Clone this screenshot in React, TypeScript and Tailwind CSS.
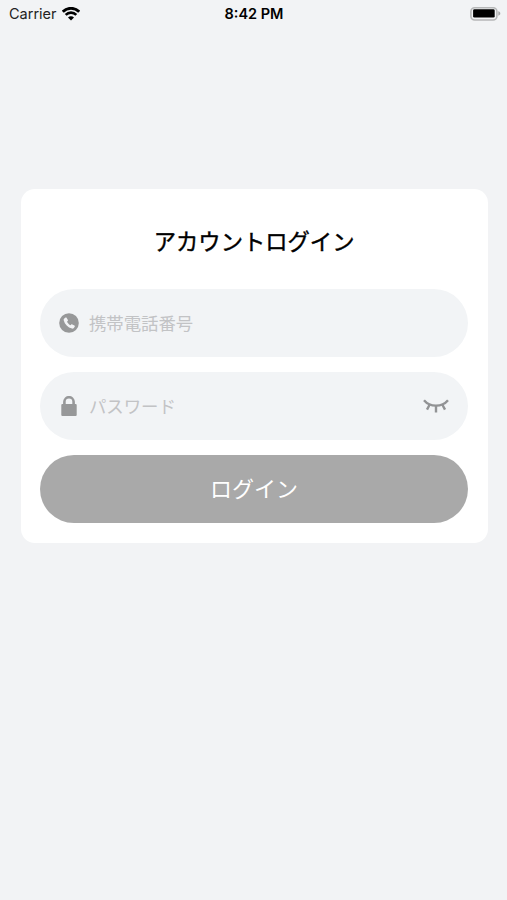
import type { ReactNode } from 'react'

const WifiIcon = () => (
	<svg
		className="h-[14px] w-[18px]"
		fill="none"
		viewBox="0 0 18 14"
	>
		<path
			d="M.8 4.7a11.5 11.5 0 0 1 16.4 0"
			stroke="#000"
			strokeWidth="2.8"
		/>
		<path
			d="M3.7 7.9a7.4 7.4 0 0 1 10.6 0"
			stroke="#000"
			strokeWidth="2.6"
		/>
		<path
			d="M6 10.5a4.2 4.2 0 0 1 6 0L9 13.5Z"
			fill="#000"
		/>
	</svg>
)

const BatteryIcon = () => (
	<svg
		className="h-[14px] w-[31px]"
		fill="none"
		viewBox="0 0 31 14"
	>
		<rect
			height="12.2"
			rx="3.8"
			stroke="#b6b7b8"
			strokeWidth="1.6"
			width="26"
			x="0.9"
			y="0.8"
		/>
		<rect
			fill="#000"
			height="8.4"
			rx="1.3"
			width="21.6"
			x="3.1"
			y="2.2"
		/>
		<path
			d="M28.3 4.3c1.3.4 2 1.2 2 2.2s-.7 1.8-2 2.2Z"
			fill="#a5a6a7"
		/>
	</svg>
)

const PhoneIcon = () => (
	<svg
		className="size-5"
		viewBox="0 0 20 20"
	>
		<circle
			cx="10"
			cy="10"
			fill="#979899"
			r="9.8"
		/>
		<path
			d="M5.3 5.4 6.5 4.6c.5-.3.9-.2 1.200.3l1.200 2.100c.2.4.1.8-.2 1.100l-.7.6c.8 1.600 2 2.800 3.600 3.600l.6-.7c.3-.3.7-.4 1.100-.2l2.100 1.200c.5.3.6.700.3 1.200l-.9 1.200c-.5.6-1.100.8-1.800.6-4.200-1.200-7.200-4.200-8.300-8.400-.2-.7 0-1.300.6-1.800Z"
			fill="#f2f3f5"
		/>
	</svg>
)

const LockIcon = () => (
	<svg
		className="size-5"
		fill="none"
		viewBox="0 0 20 20"
	>
		<path
			d="M5.4 9V5.8a4.6 4.6 0 0 1 9.2 0V9"
			stroke="#979899"
			strokeWidth="2.6"
		/>
		<rect
			fill="#979899"
			height="12"
			rx="1"
			width="15.4"
			x="2.3"
			y="8"
		/>
	</svg>
)

const ClosedEyeIcon = () => (
	<svg
		className="h-4 w-[26px]"
		fill="none"
		stroke="#929395"
		strokeWidth="2.4"
		viewBox="0 0 26 16"
	>
		<path d="M1 2.2C7 9.4 19 9.4 25 2.2" />
		<path d="M6.6 6.8 4 11.6M13 7.5v6.9M19.4 6.8 22 11.6" />
	</svg>
)

interface FieldProps {
	icon: ReactNode
	placeholder: string
	type: string
	action?: ReactNode
}

const Field = ({ icon, placeholder, type, action }: FieldProps) => (
	<label className="flex h-[68px] items-center rounded-full bg-[#f2f4f6] px-[19px]">
		{icon}
		<input
			className="mb-px ml-[10px] min-w-0 flex-1 bg-transparent text-[17.4px] outline-none placeholder:text-[#c2c3c5]"
			placeholder={placeholder}
			type={type}
		/>
		{action}
	</label>
)

const StatusBar = () => (
	<header className="grid h-7 grid-cols-3 items-center pr-[6px] pl-[9px] font-[Inter,sans-serif] text-[14.5px]">
		<div className="flex items-center gap-[5px] text-[#222]">
			<span>Carrier</span>
			<WifiIcon />
		</div>
		<span className="-ml-[2px] text-center font-semibold">8:42 PM</span>
		<div className="flex justify-end">
			<BatteryIcon />
		</div>
	</header>
)

const App = () => (
	<div className="min-h-screen bg-[#f2f3f5] font-['Noto_Sans_CJK_JP',sans-serif]">
		<StatusBar />
		<main className="mt-[161.4px] mr-[19.3px] ml-[20.5px] h-[354px] rounded-[14px] bg-white px-[19.4px] pt-[35px]">
			<h1 className="text-center font-normal text-[22.3px] leading-8 [-webkit-text-stroke:0.4px_#000]">
				アカウントログイン
			</h1>
			<form className="mt-[33px] flex flex-col gap-[15px]">
				<Field
					icon={<PhoneIcon />}
					placeholder="携帯電話番号"
					type="tel"
				/>
				<Field
					action={
						<button
							aria-label="パスワードを表示"
							type="button"
						>
							<ClosedEyeIcon />
						</button>
					}
					icon={<LockIcon />}
					placeholder="パスワード"
					type="password"
				/>
				<button
					className="h-[68px] rounded-full bg-[#a9a9a9] pb-[3px] text-[22px] text-white"
					type="button"
				>
					ログイン
				</button>
			</form>
		</main>
	</div>
)

export default App
